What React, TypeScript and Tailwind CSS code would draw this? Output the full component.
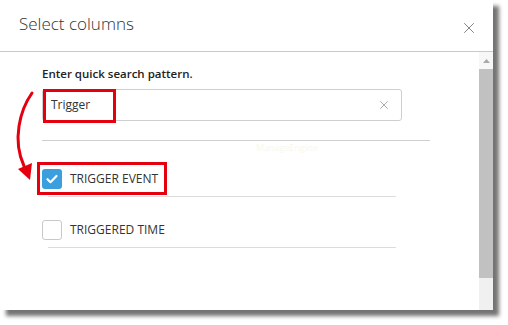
import { X } from "lucide-react"

const rows = [
  { label: "TRIGGER EVENT", checked: true, boxed: true },
  { label: "TRIGGERED TIME", checked: false, boxed: false },
]

function CheckBox({ checked }: { checked: boolean }) {
  if (checked) {
    return (
      <span className="flex h-[20px] w-[20px] items-center justify-center rounded-[3px] bg-[#3a9fdc]">
        <svg width="14" height="14" viewBox="0 0 14 14" fill="none">
          <path d="M2.5 7.2l3 3 6-6.2" stroke="white" strokeWidth="2.2" strokeLinecap="round" strokeLinejoin="round" />
        </svg>
      </span>
    )
  }
  return <span className="block h-[20px] w-[20px] rounded-[3px] border border-[#c8c8c8] bg-white" />
}

export default function App() {
  return (
    <div className="relative h-[325px] w-[508px] bg-white font-['Open_Sans',sans-serif] text-[#333]">
      <div className="flex h-[310px] w-[493px] flex-col bg-white shadow-[6px_6px_4px_rgba(0,0,0,0.55)]">
        <header className="flex h-[52px] shrink-0 items-center justify-between border-b border-[#c9c9c9] pl-[19px] pr-[15px]">
          <h1 className="mb-[4px] text-[17px] font-light text-[#333]">Select columns</h1>
          <X className="mt-[4px] h-[18px] w-[18px] text-[#777]" strokeWidth={1.2} />
        </header>

        <div className="flex min-h-0 flex-1">
          <div className="relative flex-1 pl-[42px]">
            <p className="mt-[14px] text-[11.5px] font-semibold leading-[16px] text-[#222]">Enter quick search pattern.</p>

            <div className="relative mt-[7px] flex h-[32px] w-[360px] items-center justify-between rounded-[3px] border border-[#cfcfcf] pl-[8px] pr-[10px]">
              <span className="text-[12px] text-[#333]">Trigger</span>
              <X className="h-[14px] w-[14px] text-[#888]" strokeWidth={1.2} />
              <div className="absolute left-[0px] top-[-1px] h-[34px] w-[73px] border-[3px] border-[#e4000f]" />
            </div>

            <div className="mt-[19px] h-px w-[388px] bg-[#cfcfcf]" />
            <p className="ml-[214px] mt-[1px] text-[9px] leading-[12px] text-[#f8f8ee]">ManageEngine</p>

            <div className="mt-[8px] flex flex-col">
              {rows.map((row) => (
                <div key={row.label} className="flex flex-col">
                  <div className="relative flex h-[33px] items-center gap-[8px]">
                    <CheckBox checked={row.checked} />
                    <span className="text-[12px] text-[#333]">{row.label}</span>
                    {row.boxed && (
                      <div className="absolute left-[-5px] top-[0px] h-[33px] w-[130px] border-[3px] border-[#e4000f]" />
                    )}
                  </div>
                  <div className="ml-[6px] mt-[1px] mb-[16px] h-px w-[348px] bg-[#dcdcdc]" />
                </div>
              ))}
            </div>

            <svg className="absolute left-[12px] top-[38px]" width="30" height="94" viewBox="0 0 30 94" fill="none">
              <path d="M20 3 C8 20, 0 50, 12 76" stroke="#e4000f" strokeWidth="3" strokeLinecap="round" />
              <path d="M6 79 L18 90 L20 73 Z" fill="#e4000f" />
            </svg>
          </div>

          <div className="flex w-[14px] shrink-0 flex-col bg-[#f0f0f0]">
            <div className="flex h-[17px] items-center justify-center bg-[#f7f7f7]">
              <svg width="7" height="4" viewBox="0 0 7 4">
                <path d="M0 4 L3.5 0 L7 4 Z" fill="#a8a8a8" />
              </svg>
            </div>
            <div className="h-[209px] bg-[#c1c1c1]" />
          </div>
        </div>
      </div>
    </div>
  )
}
